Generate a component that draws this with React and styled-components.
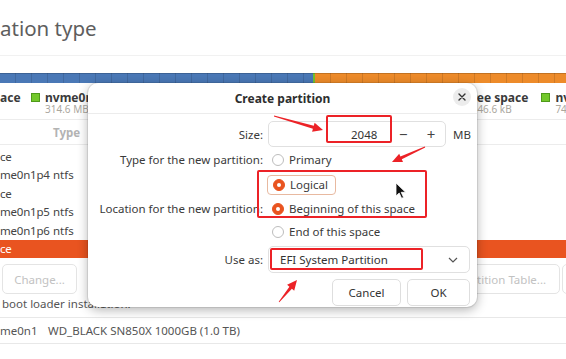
import React from 'react';
import styled, { createGlobalStyle } from 'styled-components';

// Page reset and base font
const Global = createGlobalStyle`
  html, body {
    margin: 0;
    padding: 0;
    background: #ffffff;
  }
  body {
    width: 566px;
    height: 359px;
    overflow: hidden;
    font-family: "Noto Sans", "DejaVu Sans", sans-serif;
    font-size: 11.5px;
    color: #3c3c3c;
  }
`;

const Page = styled.div`
  position: relative;
  width: 566px;
  height: 359px;
  overflow: hidden;
  background: #fff;
`;

// Installer window behind the dialog
const Header = styled.header`
  height: 56px;
  box-sizing: border-box;
  padding-top: 13px;
  border-bottom: 1px solid #f1f1f1;
`;

const Title = styled.h1`
  margin: 0;
  font-size: 20.5px;
  font-weight: 400;
  line-height: 30px;
  color: #5e5e5e;
  white-space: nowrap;
`;

const Bar = styled.div`
  display: flex;
  height: 10px;
  margin-top: 17px;
`;

const Segment = styled.div`
  width: ${p => p.$w ? `${p.$w}px` : 'auto'};
  flex: ${p => p.$w ? 'none' : 1};
  background-color: ${p => p.$color};
  background-image: repeating-linear-gradient(90deg, transparent 0 15px, rgba(0, 0, 0, 0.12) 15px 16px);
  border-top: 1px solid rgba(0, 0, 0, 0.18);
  box-sizing: border-box;
`;

const Legend = styled.div`
  display: flex;
  height: 37px;
  box-sizing: border-box;
  padding-top: 8px;
  border-bottom: 1px solid #ececec;
  white-space: nowrap;
`;

const LegendItem = styled.div`
  display: flex;
  align-items: flex-start;
  gap: 5px;
  width: ${p => p.$w ? `${p.$w}px` : 'auto'};
  margin-right: ${p => p.$gap ?? 5}px;
  flex: none;
`;

const Swatch = styled.span`
  width: 9px;
  height: 9px;
  margin-top: 2px;
  background: #73c82b;
  border: 1px solid #4f9a1a;
  box-sizing: border-box;
  flex: none;
`;

const LegendText = styled.div`
  display: flex;
  flex-direction: column;
`;

const LegendName = styled.span`
  font-weight: 700;
  font-size: 12px;
  line-height: 13px;
  color: #3a3a3a;
`;

const LegendSize = styled.span`
  font-size: 10px;
  line-height: 11px;
  color: #aba79e;
`;

const RightLegend = styled.div`
  display: flex;
  margin-left: auto;
  width: 99px;
  overflow: hidden;
  flex: none;
`;

const TableHead = styled.div`
  display: flex;
  height: 23px;
  align-items: center;
  border-bottom: 1px solid #ececec;
  margin-top: 1px;
`;

const HeadCell = styled.span`
  margin-left: 53px;
  font-weight: 700;
  color: #b3b3b3;
`;

const Rows = styled.div`
  padding-top: 2px;
`;

const Row = styled.div`
  display: flex;
  align-items: center;
  height: 18.5px;
  white-space: nowrap;
  color: ${p => p.$selected ? '#ffffff' : '#444'};
  background: ${p => p.$selected ? '#e95420' : 'transparent'};
`;

const NameCell = styled.span`
  width: 53px;
  flex: none;
  letter-spacing: -0.2px;
`;

const ButtonRow = styled.div`
  display: flex;
  gap: 2px;
  margin: 6px -56px 0 0;
  padding-left: 2px;
  height: 30px;
`;

const GhostButton = styled.div`
  display: flex;
  align-items: center;
  justify-content: center;
  width: ${p => p.$w}px;
  margin-left: ${p => p.$push ? 'auto' : '0'};
  flex: none;
  box-sizing: border-box;
  border: 1px solid #e4e4e4;
  border-radius: 5px;
  color: #c2c2c2;
  white-space: nowrap;
  overflow: hidden;
`;

const BootText = styled.div`
  margin: 1px 0 0 2px;
  height: 18px;
  line-height: 18px;
  color: #555;
  white-space: nowrap;
`;

const DeviceRow = styled.div`
  display: flex;
  align-items: center;
  height: 25px;
  margin-top: 4px;
  border-top: 1px solid #e8e8e8;
  border-bottom: 1px solid #e8e8e8;
  color: #555;
  white-space: nowrap;
`;

const DeviceName = styled.span`
  width: 48px;
  flex: none;
`;

// Create partition dialog
const Dialog = styled.div`
  position: absolute;
  left: 88px;
  top: 83px;
  width: 389px;
  height: 224px;
  box-sizing: border-box;
  background: #ffffff;
  border-radius: 10px;
  box-shadow: 0 0 0 1px rgba(0, 0, 0, 0.08), 0 3px 11px rgba(0, 0, 0, 0.3);
`;

const DialogHead = styled.div`
  position: relative;
  display: flex;
  align-items: center;
  justify-content: center;
  height: 30px;
  border-bottom: 1px solid #ececec;
`;

const DialogTitle = styled.span`
  font-weight: 700;
  font-size: 12px;
  color: #2e2e2e;
`;

const CloseButton = styled.div`
  position: absolute;
  right: 6px;
  top: 5px;
  width: 18px;
  height: 18px;
  border-radius: 50%;
  background: #ececec;
  display: flex;
  align-items: center;
  justify-content: center;
`;

const Form = styled.div`
  display: grid;
  grid-template-columns: 175px 1fr;
  grid-template-rows: 26px 25px 25px 23px 23px 30px;
  column-gap: 5px;
  padding: 7px 7px 0 0;
`;

const Label = styled.div`
  display: flex;
  align-items: ${p => p.$end ? 'flex-end' : 'center'};
  padding-bottom: ${p => p.$end ? '6px' : '0'};
  justify-content: flex-end;
  color: #3a3a3a;
  white-space: nowrap;
`;

const Cell = styled.div`
  display: flex;
  align-items: ${p => p.$end ? 'flex-end' : 'center'};
`;

const SpinBox = styled.div`
  display: flex;
  width: 178px;
  height: 26px;
  box-sizing: border-box;
  border: 1px solid #e0e0e0;
  border-radius: 5px;
`;

const SpinValue = styled.div`
  width: 121px;
  display: flex;
  align-items: center;
  justify-content: flex-end;
  padding-right: 12px;
  box-sizing: border-box;
  color: #333;
`;

const SpinStep = styled.div`
  width: 28px;
  display: flex;
  align-items: center;
  justify-content: center;
  font-size: 15px;
  color: #444;
`;

const Unit = styled.span`
  margin-left: 7px;
  color: #3a3a3a;
`;

const RadioLabel = styled.div`
  display: flex;
  align-items: center;
  gap: 5px;
  margin-left: ${p => p.$focus ? '-1px' : '4px'};
  padding: ${p => p.$focus ? '0 7px 0 5px' : '0'};
  height: 20px;
  box-sizing: border-box;
  border: ${p => p.$focus ? '1px solid #e8b9a0' : 'none'};
  border-radius: 4px;
  color: #3a3a3a;
  white-space: nowrap;
`;

const RadioDot = styled.span`
  width: 12px;
  height: 12px;
  flex: none;
  box-sizing: border-box;
  border-radius: 50%;
  border: 1px solid ${p => p.$on ? '#e95420' : '#bdbdbd'};
  background: ${p => p.$on ? '#e95420' : '#ffffff'};
  display: flex;
  align-items: center;
  justify-content: center;

  &::after {
    content: '';
    display: ${p => p.$on ? 'block' : 'none'};
    width: 4px;
    height: 4px;
    border-radius: 50%;
    background: #ffffff;
  }
`;

const Select = styled.div`
  display: flex;
  align-items: center;
  justify-content: space-between;
  width: 202px;
  height: 27px;
  box-sizing: border-box;
  padding: 0 11px;
  border: 1px solid #e0e0e0;
  border-radius: 5px;
  color: #333;
`;

const Actions = styled.div`
  display: flex;
  justify-content: flex-end;
  gap: 6px;
  margin-top: 6px;
  padding-right: 7px;
`;

const DialogButton = styled.div`
  display: flex;
  align-items: center;
  justify-content: center;
  width: ${p => p.$w}px;
  height: 27px;
  box-sizing: border-box;
  border: 1px solid #dedede;
  border-radius: 5px;
  color: #333;
`;

// Red annotation overlays
const Mark = styled.div`
  position: absolute;
  left: ${p => p.$x}px;
  top: ${p => p.$y}px;
  width: ${p => p.$w}px;
  height: ${p => p.$h}px;
  box-sizing: border-box;
  border: 2px solid #ec2227;
  border-radius: 2px;
  pointer-events: none;
`;

const Overlay = styled.svg`
  position: absolute;
  left: 0;
  top: 0;
  pointer-events: none;
`;

// tapered arrow shape from tail to tip
function arrowPoints([x1, y1], [x2, y2]) {
  const dx = x2 - x1;
  const dy = y2 - y1;
  const len = Math.hypot(dx, dy);
  const ux = dx / len;
  const uy = dy / len;
  const nx = -uy;
  const ny = ux;
  const head = 10;
  const bx = x2 - ux * head;
  const by = y2 - uy * head;
  const pt = (x, y, k) => `${(x + nx * k).toFixed(1)},${(y + ny * k).toFixed(1)}`;
  return [
    pt(x1, y1, 0.4),
    pt(bx, by, 1.6),
    pt(bx, by, 4.6),
    `${x2},${y2}`,
    pt(bx, by, -4.6),
    pt(bx, by, -1.6),
    pt(x1, y1, -0.4),
  ].join(' ');
}

const Radio = ({ on, focus, children }) => (
  <RadioLabel $focus={focus}>
    <RadioDot $on={on} />
    {children}
  </RadioLabel>
);

function App() {
  const rows = [
    ['ce', ''],
    ['me0n1p4', 'ntfs'],
    ['ce', ''],
    ['me0n1p5', 'ntfs'],
    ['me0n1p6', 'ntfs'],
  ];

  return (
    <Page>
      <Global />

      {/* Installer page behind */}
      <Header>
        <Title>ation type</Title>
      </Header>
      <Bar>
        <Segment $w={313} $color="#4a78b6" />
        <Segment $w={2} $color="#74c02e" />
        <Segment $color="#ed8b2a" />
      </Bar>
      <Legend>
        <LegendItem $w={31} $gap={0}>
          <LegendText>
            <LegendName>ace</LegendName>
          </LegendText>
        </LegendItem>
        <LegendItem>
          <Swatch />
          <LegendText>
            <LegendName>nvme0n1p7</LegendName>
            <LegendSize>314.6 MB</LegendSize>
          </LegendText>
        </LegendItem>
        <RightLegend>
          <LegendItem $gap={13}>
            <LegendText>
              <LegendName>free space</LegendName>
              <LegendSize>&nbsp;&nbsp;&nbsp;&nbsp;46.6 kB</LegendSize>
            </LegendText>
          </LegendItem>
          <LegendItem>
            <Swatch />
            <LegendText>
              <LegendName>nvme0n1p8</LegendName>
              <LegendSize>74.1 GB</LegendSize>
            </LegendText>
          </LegendItem>
        </RightLegend>
      </Legend>
      <TableHead>
        <HeadCell>Type</HeadCell>
      </TableHead>
      <Rows>
        {rows.map(([name, type], i) => (
          <Row key={i}>
            <NameCell>{name}</NameCell>
            {type}
          </Row>
        ))}
        <Row $selected>
          <NameCell>ce</NameCell>
        </Row>
      </Rows>
      <ButtonRow>
        <GhostButton $w={75}>Change...</GhostButton>
        <GhostButton $w={142} $push>New Partition Table...</GhostButton>
        <GhostButton $w={60}>Revert</GhostButton>
      </ButtonRow>
      <BootText>boot loader installation:</BootText>
      <DeviceRow>
        <DeviceName>me0n1</DeviceName>
        WD_BLACK SN850X 1000GB (1.0 TB)
      </DeviceRow>

      {/* Dialog */}
      <Dialog>
        <DialogHead>
          <DialogTitle>Create partition</DialogTitle>
          <CloseButton>
            <svg width="8" height="8" viewBox="0 0 8 8">
              <path d="M1 1 L7 7 M7 1 L1 7" stroke="#333" strokeWidth="1.4" strokeLinecap="round" />
            </svg>
          </CloseButton>
        </DialogHead>
        <Form>
          <Label>Size:</Label>
          <Cell>
            <SpinBox>
              <SpinValue>2048</SpinValue>
              <SpinStep>−</SpinStep>
              <SpinStep>+</SpinStep>
            </SpinBox>
            <Unit>MB</Unit>
          </Cell>

          <Label>Type for the new partition:</Label>
          <Cell><Radio>Primary</Radio></Cell>

          <Label />
          <Cell><Radio on focus>Logical</Radio></Cell>

          <Label>Location for the new partition:</Label>
          <Cell><Radio on>Beginning of this space</Radio></Cell>

          <Label />
          <Cell><Radio>End of this space</Radio></Cell>

          <Label $end>Use as:</Label>
          <Cell $end>
            <Select>
              EFI System Partition
              <svg width="10" height="6" viewBox="0 0 10 6">
                <path d="M1 1 L5 5 L9 1" fill="none" stroke="#555" strokeWidth="1.2" />
              </svg>
            </Select>
          </Cell>
        </Form>
        <Actions>
          <DialogButton $w={69}>Cancel</DialogButton>
          <DialogButton $w={63}>OK</DialogButton>
        </Actions>

        <Mark $x={238} $y={32} $w={66} $h={28} />
        <Mark $x={169} $y={87} $w={170} $h={48} />
        <Mark $x={182} $y={165} $w={153} $h={22} />
      </Dialog>

      {/* Arrows and pointer */}
      <Overlay width="566" height="359" viewBox="0 0 566 359">
        <polygon points={arrowPoints([274, 116], [323, 130])} fill="#ec2227" />
        <polygon points={arrowPoints([425, 147], [392, 162])} fill="#ec2227" />
        <polygon points={arrowPoints([279, 302], [297, 280])} fill="#ec2227" />
        <path
          d="M396 183 L396 196 L399.2 193 L401.6 198.3 L403.6 197.4 L401.2 192.3 L405.6 192.3 Z"
          fill="#111"
          stroke="#fff"
          strokeWidth="0.8"
        />
      </Overlay>
    </Page>
  );
}

export default App;
